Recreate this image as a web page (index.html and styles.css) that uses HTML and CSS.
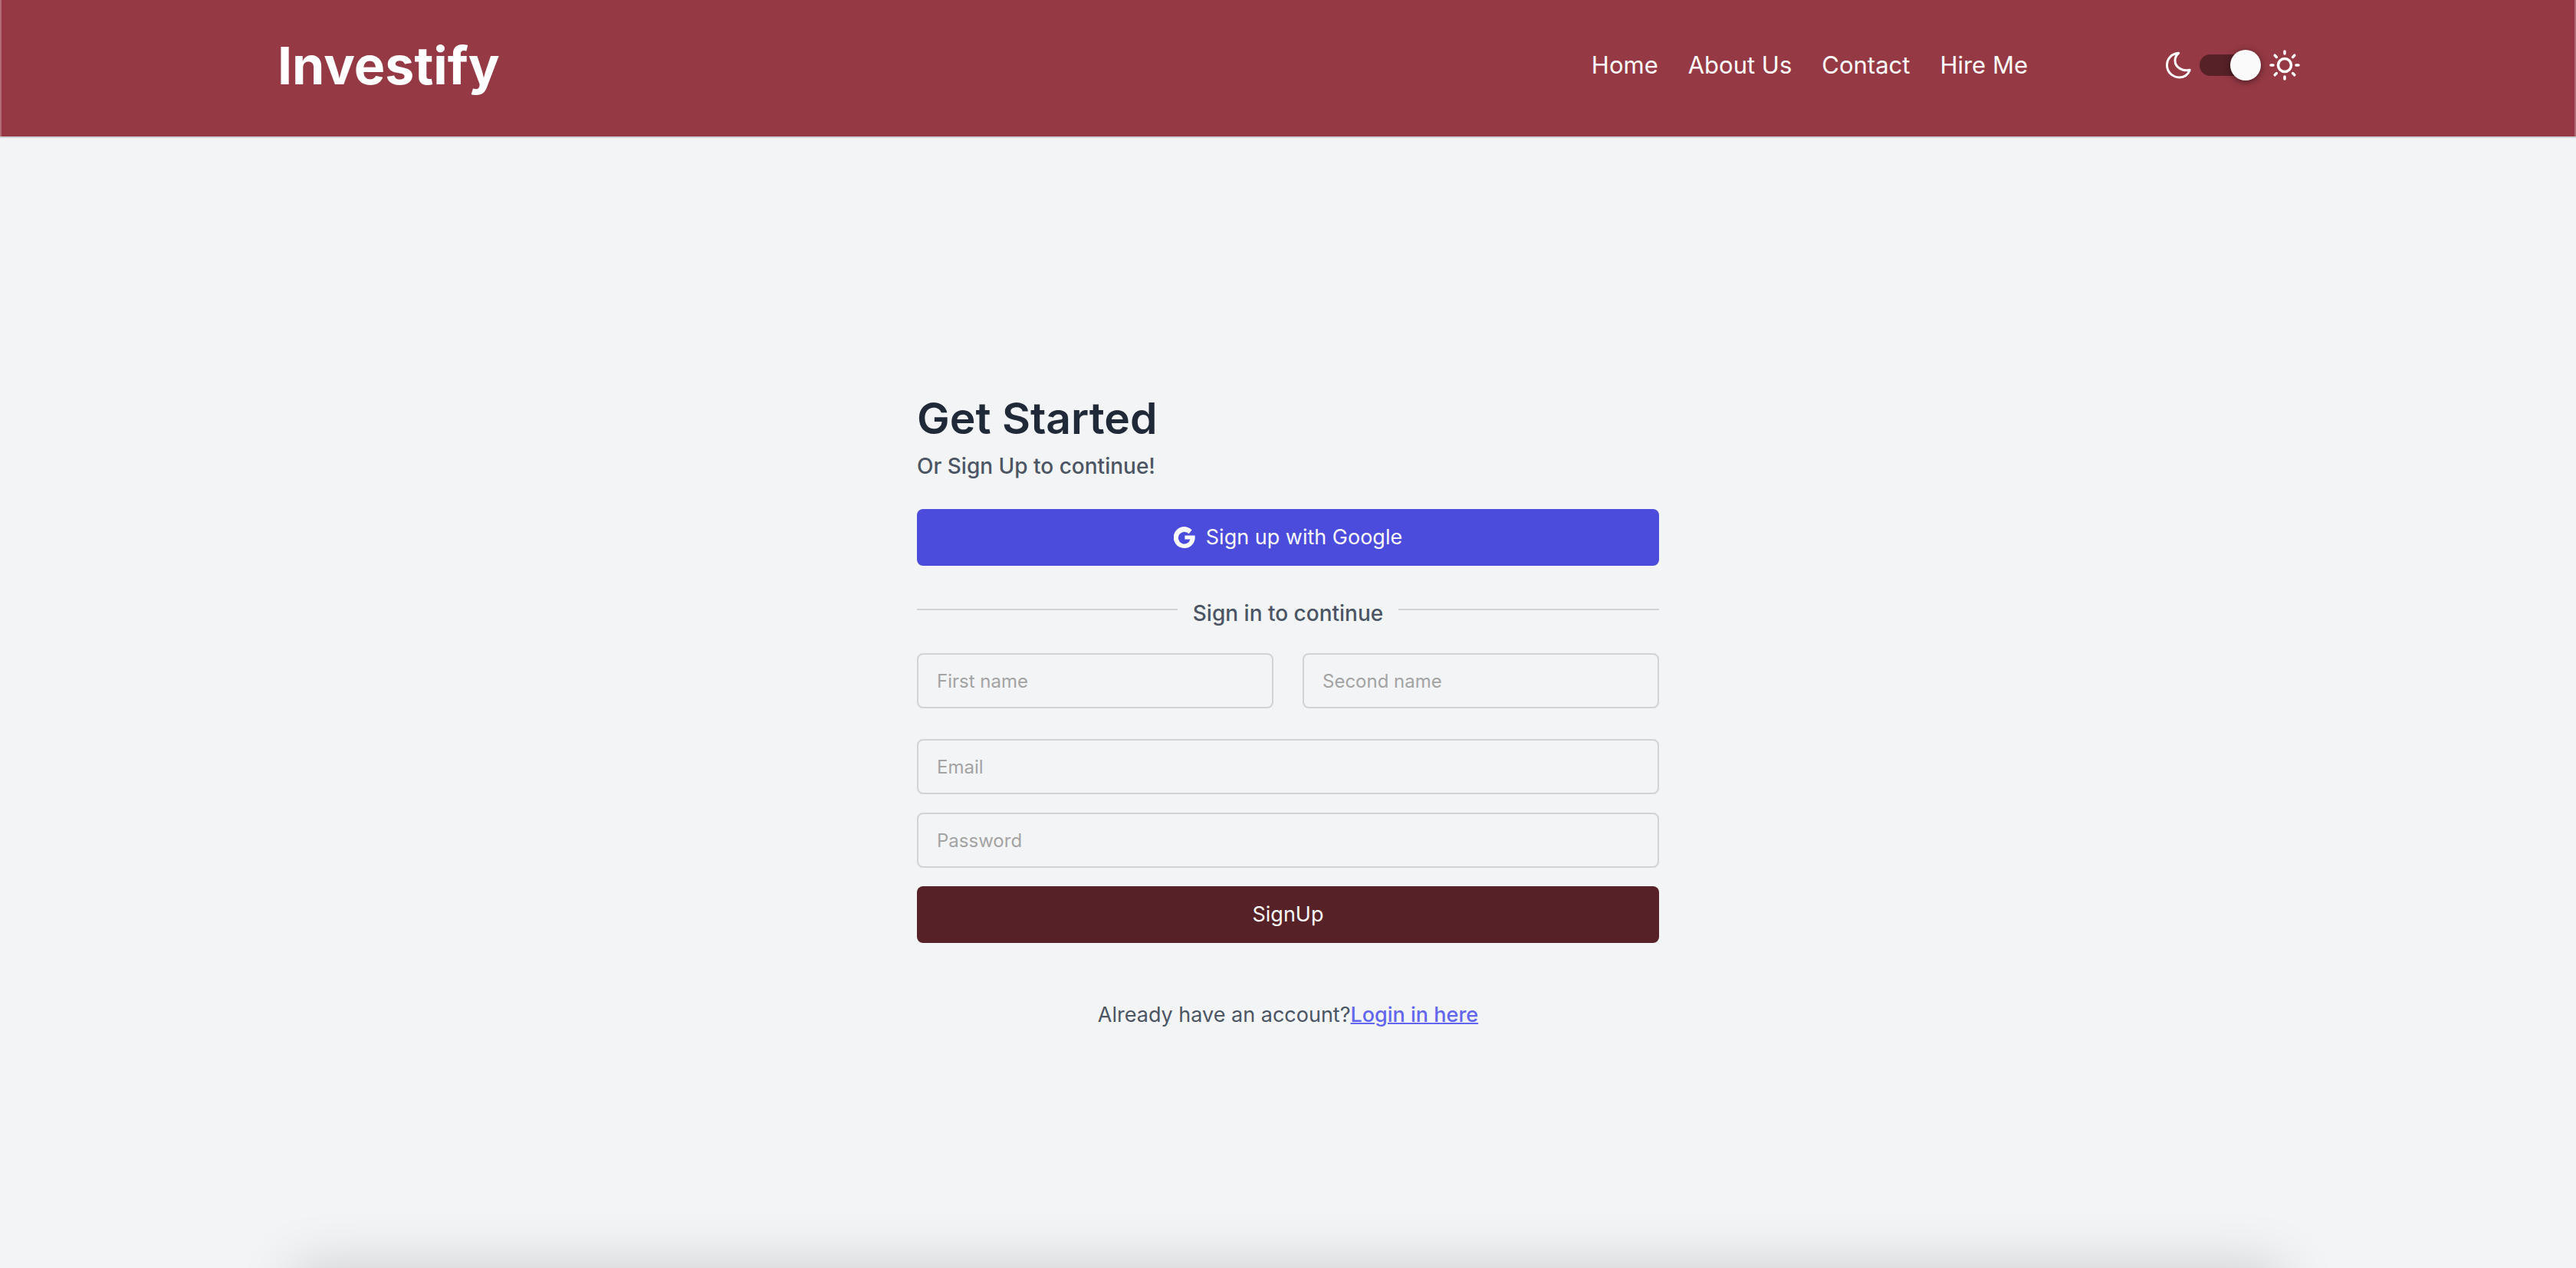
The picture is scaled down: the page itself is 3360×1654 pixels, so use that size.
FILE: index.html
```html
<!DOCTYPE html>
<html lang="en">
<head>
  <meta charset="utf-8">
  <meta name="viewport" content="width=device-width, initial-scale=1">
  <title>Investify – Sign Up</title>
  <link rel="stylesheet" href="styles.css">
</head>
<body>
  <header class="site-header">
    <a class="logo" href="#">Investify</a>
    <div class="header-right">
      <nav class="nav" aria-label="Main">
        <a href="#">Home</a>
        <a href="#">About Us</a>
        <a href="#">Contact</a>
        <a href="#">Hire Me</a>
      </nav>
      <div class="theme">
        <svg class="theme-icon" viewBox="0 0 40 40" aria-hidden="true">
          <path d="M18.700 4.300C9 5 3.500 12 3.500 20A16 16 0 0 0 19.500 36C26 36 31 32.500 33.300 26.300C24 28.500 14 23 14 14C14 10 16 6.500 18.700 4.300Z"/>
        </svg>
        <input class="switch" type="checkbox" role="switch" aria-label="Light theme" checked>
        <svg class="theme-icon theme-icon-sun" viewBox="0 0 40 40" aria-hidden="true">
          <circle cx="20" cy="20" r="8.500"/>
          <path d="M20 2v3M20 35v3M2 20h3M35 20h3M7.200 7.200l2.200 2.200M30.600 30.600l2.200 2.200M7.200 32.800l2.200-2.200M30.600 9.400l2.200-2.200"/>
        </svg>
      </div>
    </div>
  </header>

  <main class="page">
    <form class="signup">
      <h1 class="title">Get Started</h1>
      <p class="subtitle">Or Sign Up to continue!</p>
      <button class="button button-google" type="button">
        <svg class="google-icon" viewBox="0 0 28 28" aria-hidden="true">
          <path d="M19.700 9.200A7.900 7.900 0 1 0 21.500 16.600H14.400V11.400H27.600C28.800 20.500 23 28 14 28A14 14 0 1 1 23.700 4.200Z"/>
        </svg>
        Sign up with Google
      </button>
      <div class="divider"><span class="rule"></span><span class="divider-text">Sign in to continue</span><span class="rule"></span></div>
      <div class="names">
        <input class="field" type="text" placeholder="First name" aria-label="First name">
        <input class="field" type="text" placeholder="Second name" aria-label="Second name">
      </div>
      <div class="credentials">
        <input class="field" type="email" placeholder="Email" aria-label="Email">
        <input class="field" type="password" placeholder="Password" aria-label="Password">
        <button class="button button-submit" type="submit">SignUp</button>
      </div>
      <p class="login">Already have an account?<a href="#">Login in here</a></p>
    </form>
  </main>
  <div class="bottom-shade"></div>
</body>
</html>
```

FILE: styles.css
```css
* {
  box-sizing: border-box;
}

body {
  margin: 0;
  min-height: 100vh;
  display: flex;
  flex-direction: column;
  position: relative;
  background: #f3f4f6;
  color: #4b5563;
  font-family: Inter, "Liberation Sans", sans-serif;
  font-size: 27px;
  line-height: 40px;
}

.site-header {
  display: flex;
  align-items: center;
  justify-content: space-between;
  padding: 45px 360px 53px;
  background: #953944;
  border-bottom: 2px solid #d1d3d6;
  box-shadow: inset 2px 0 rgba(255, 255, 255, 0.25), inset -2px 0 rgba(255, 255, 255, 0.25);
}

.logo {
  margin-left: 2px;
  color: #fff;
  font-size: 68px;
  font-weight: 700;
  line-height: 80px;
  text-decoration: none;
}

.header-right {
  display: flex;
  align-items: center;
  gap: 178px;
}

.nav {
  display: flex;
  gap: 39px;
}

.nav a {
  color: #fff;
  font-size: 31px;
  text-decoration: none;
}

.theme {
  display: flex;
  align-items: center;
}

.theme-icon {
  width: 40px;
  height: 40px;
  fill: none;
  stroke: #fff;
  stroke-width: 3;
  stroke-linecap: round;
  stroke-linejoin: round;
}

.theme-icon-sun {
  stroke-width: 3.5;
}

.switch {
  appearance: none;
  display: flex;
  align-items: center;
  justify-content: flex-end;
  width: 80px;
  height: 28px;
  margin: 0 11px 0 6px;
  border-radius: 14px;
  background: #562127;
}

.switch::before {
  content: "";
  width: 40px;
  height: 40px;
  flex: none;
  border-radius: 50%;
  background: #fafafa;
  box-shadow: 0 2px 8px rgba(0, 0, 0, 0.5);
}

.page {
  display: flex;
  flex: 1;
  align-items: center;
  justify-content: center;
  padding-top: 20px;
}

.signup {
  width: 968px;
  max-width: 100%;
}

.title {
  margin: 0;
  color: #1f2937;
  font-size: 57px;
  font-weight: 600;
  line-height: 72px;
}

.subtitle {
  margin: 6px 0 36px;
  font-size: 28px;
  font-weight: 500;
}

.button {
  display: flex;
  align-items: center;
  justify-content: center;
  gap: 14px;
  width: 100%;
  height: 74px;
  padding: 0;
  border: 0;
  border-radius: 8px;
  color: #fafafa;
  font: inherit;
}

.button-google {
  background: #4b4bdc;
}

.button-submit {
  background: #562127;
}

.google-icon {
  width: 28px;
  height: 28px;
  fill: #fafafa;
}

.divider {
  display: flex;
  gap: 20px;
  margin: 42px 0 32px;
}

.rule {
  flex: 1;
  height: 2px;
  margin-top: 14px;
  background: #d1d3d6;
}

.divider-text {
  font-size: 28px;
  font-weight: 500;
}

.names {
  display: flex;
  gap: 38px;
  margin-bottom: 40px;
}

.credentials {
  display: grid;
  gap: 24px;
}

.field {
  width: 100%;
  height: 72px;
  padding: 0 24px;
  border: 2px solid #d1d3d6;
  border-radius: 8px;
  background: transparent;
  color: #1f2937;
  font: inherit;
  font-size: 24px;
}

.field::placeholder {
  color: #a3a3a3;
}

.login {
  margin: 74px 0 0;
  text-align: center;
}

.login a {
  color: #6366f1;
  font-weight: 500;
  text-decoration-thickness: 2px;
}

/* Soft shadow rising from the lower edge of the page */
.bottom-shade {
  position: absolute;
  bottom: 0;
  left: 0;
  right: 0;
  height: 80px;
  padding: 80px 384px 0;
  overflow: hidden;
  pointer-events: none;
}

.bottom-shade::before {
  content: "";
  display: block;
  height: 100px;
  box-shadow: 0 0 72px rgba(0, 0, 0, 0.17);
}
```
